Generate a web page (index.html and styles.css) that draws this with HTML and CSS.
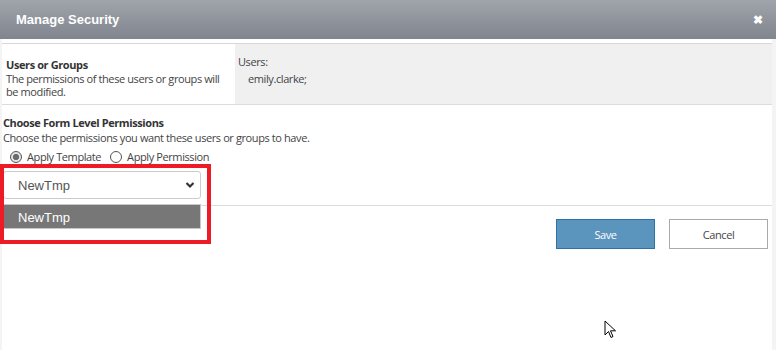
FILE: index.html
```html
<!DOCTYPE html>
<html lang="en">
<head>
    <meta charset="UTF-8">
    <meta name="viewport" content="width=device-width, initial-scale=1.0">
    <title>Manage Security</title>
    <link rel="stylesheet" href="styles.css">
</head>
<body>
    <div class="dialog">
        <!-- Title bar -->
        <div class="dialog-header">
            <span class="dialog-title">Manage Security</span>
            <span class="dialog-close">&#10006;</span>
        </div>

        <div class="dialog-body">
            <!-- Who is affected -->
            <div class="users-row">
                <div class="users-info">
                    <div class="section-title">Users or Groups</div>
                    <div class="section-text">The permissions of these users or groups will be modified.</div>
                </div>
                <div class="users-list">
                    <div>Users:</div>
                    <div class="user-name">emily.clarke;</div>
                </div>
            </div>

            <!-- Permission choice -->
            <div class="permissions">
                <div class="section-title">Choose Form Level Permissions</div>
                <div class="section-text">Choose the permissions you want these users or groups to have.</div>
                <div class="radio-group">
                    <label class="radio"><span class="radio-dot checked"></span>Apply Template</label>
                    <label class="radio"><span class="radio-dot"></span>Apply Permission</label>
                </div>
                <div class="template-picker">
                    <div class="select">
                        <span>NewTmp</span>
                        <svg class="chevron" width="10" height="8" viewBox="0 0 10 8">
                            <path d="M1.5 2 L5 5.5 L8.5 2" fill="none" stroke="#333" stroke-width="2.2"/>
                        </svg>
                    </div>
                    <div class="select-menu">
                        <div class="select-option">NewTmp</div>
                    </div>
                    <div class="highlight"></div>
                </div>
            </div>

            <div class="dialog-footer">
                <button class="btn btn-primary">Save</button>
                <button class="btn">Cancel</button>
            </div>
        </div>
    </div>

    <!-- mouse pointer -->
    <svg class="pointer" width="14" height="20" viewBox="0 0 14 20">
        <path d="M1 1 L1 15 L4.5 11.5 L7 17.5 L9 16.5 L6.5 10.8 L11.5 10.8 Z" fill="#fff" stroke="#000" stroke-width="1"/>
    </svg>
</body>
</html>
```

FILE: styles.css
```css
body {
    margin: 0;
    background-color: #fff;
    font-family: 'Open Sans', sans-serif;
    font-size: 11px;
    letter-spacing: -0.4px;
    color: #444;
    width: 776px;
    height: 350px;
    overflow: hidden;
    position: relative;
}

.dialog {
    display: flex;
    flex-direction: column;
    height: 350px;
}

.dialog-header {
    height: 39px;
    display: flex;
    align-items: center;
    justify-content: space-between;
    padding: 0 16px;
    background: linear-gradient(to bottom, #a0a4ab, #80858e);
    color: #fff;
}

.dialog-title {
    font-family: 'Liberation Sans', Arial, sans-serif;
    font-weight: bold;
    font-size: 13px;
    letter-spacing: 0;
}

.dialog-close {
    font-size: 12px;
    font-weight: bold;
    margin-right: -3px;
}

.dialog-body {
    flex-grow: 1;
    padding-top: 4px;
    border-left: 2px solid #f4f4f4;
    border-right: 4px solid #f4f4f4;
}

.users-row {
    display: grid;
    grid-template-columns: 233px 1fr;
    height: 60px;
    border-top: 1px solid #d8d8d8;
    border-bottom: 1px solid #dcdcdc;
}

.users-info {
    padding: 14px 4px 0 4px;
    line-height: 13.5px;
}

.users-list {
    background-color: #f0f0f0;
    padding: 9px 3px 0 3px;
    line-height: 17px;
}

.user-name {
    padding-left: 10px;
}

.section-title {
    font-weight: bold;
    color: #333;
}

.permissions {
    padding: 10px 1px 0 1px;
    line-height: 15px;
}

.radio-group {
    display: flex;
    gap: 9px;
    padding-left: 7px;
    margin-top: 4px;
}

.radio {
    display: flex;
    align-items: center;
    gap: 5px;
    font-size: 11px;
}

.radio-dot {
    width: 12px;
    height: 12px;
    border: 1px solid #555;
    border-radius: 50%;
    box-sizing: border-box;
    background-color: #fff;
}

.radio-dot.checked {
    background: radial-gradient(circle, #6b6b6b 0, #6b6b6b 2.8px, #e4e4e4 3.4px);
}

.template-picker {
    position: relative;
    width: 198px;
    margin-top: 7px;
}

.select {
    height: 28px;
    display: flex;
    align-items: center;
    justify-content: space-between;
    padding: 0 5px 0 14px;
    border: 1px solid #ccc;
    border-radius: 3px;
    box-sizing: border-box;
    font-family: 'Liberation Sans', Arial, sans-serif;
    font-size: 13px;
    letter-spacing: 0;
    color: #555;
}

.select-menu {
    position: absolute;
    top: 33px;
    left: 0;
    width: 198px;
    z-index: 2;
}

.select-option {
    height: 25px;
    line-height: 25px;
    padding-left: 14px;
    background-color: #777;
    border: 1px solid #c8c8c8;
    box-sizing: border-box;
    font-family: 'Liberation Sans', Arial, sans-serif;
    font-size: 13px;
    letter-spacing: 0;
    color: #fff;
}

.highlight {
    position: absolute;
    top: -7px;
    left: -3px;
    width: 211px;
    height: 80px;
    border: 4px solid #ed1c24;
    box-sizing: border-box;
    z-index: 3;
}

.dialog-footer {
    margin-top: 6px;
    border-top: 1px solid #ddd;
    display: flex;
    justify-content: flex-end;
    gap: 14px;
    padding: 13px 4px 0 0;
}

.btn {
    width: 99px;
    height: 30px;
    background-color: #fff;
    border: 1px solid #aaa;
    font-family: 'Open Sans', sans-serif;
    font-size: 11px;
    letter-spacing: -0.4px;
    color: #444;
    padding: 0;
}

.btn-primary {
    background-color: #5b94bc;
    border-color: #2f72a8;
    color: #fff;
}

.pointer {
    position: absolute;
    left: 604px;
    top: 320px;
}
```
